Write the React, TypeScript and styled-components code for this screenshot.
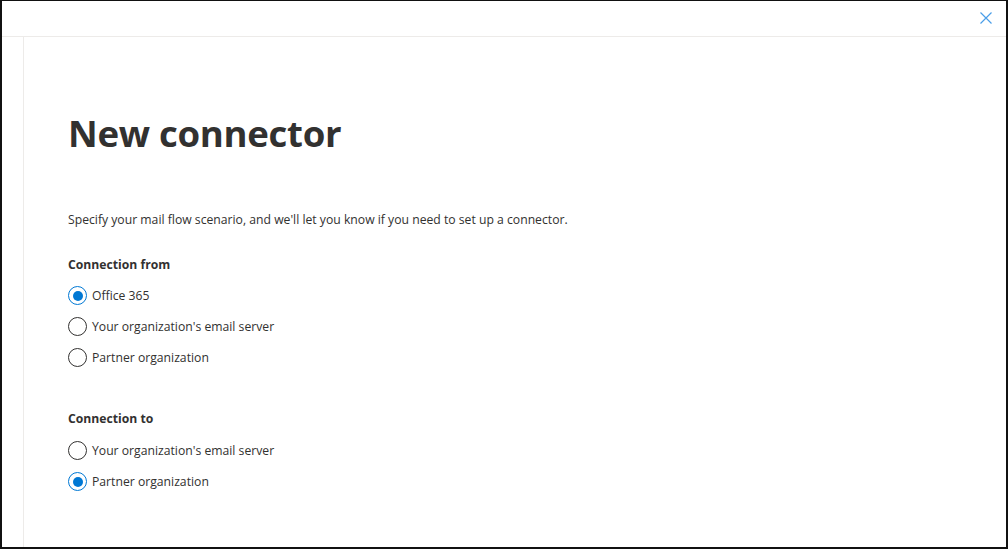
import styled, { createGlobalStyle } from "styled-components";

const GlobalStyle = createGlobalStyle`
    html, body {
        margin: 0;
        padding: 0;
        background: #fff;
    }
    body {
        font-family: "Open Sans", "Noto Sans", sans-serif;
        color: #323130;
    }
`;

interface RadioOptionProps {
    label: string;
    checked?: boolean;
}

const RadioOption: React.FC<RadioOptionProps> = ({ label, checked }) => {
    return (
        <OptionRow>
            <Circle $checked={!!checked}>{checked && <Dot />}</Circle>
            <OptionLabel>{label}</OptionLabel>
        </OptionRow>
    );
};

const App = () => {
    return (
        <>
            <GlobalStyle />
            <Frame>
                <Header>
                    <CloseButton aria-label="Close">
                        <svg width="12" height="12" viewBox="0 0 12 12">
                            <path d="M0.5 0.5 L11.5 11.5 M11.5 0.5 L0.5 11.5" stroke="#4a9ee8" strokeWidth="1.2" fill="none" />
                        </svg>
                    </CloseButton>
                </Header>
                <Body>
                    <Rail />
                    <Content>
                        <Title>New connector</Title>
                        <Description>
                            Specify your mail flow scenario, and we'll let you know if you need to set up a connector.
                        </Description>

                        <Group>
                            <GroupLabel>Connection from</GroupLabel>
                            <RadioOption label="Office 365" checked />
                            <RadioOption label="Your organization's email server" />
                            <RadioOption label="Partner organization" />
                        </Group>

                        <Group>
                            <GroupLabel>Connection to</GroupLabel>
                            <RadioOption label="Your organization's email server" />
                            <RadioOption label="Partner organization" checked />
                        </Group>
                    </Content>
                </Body>
            </Frame>
        </>
    );
};

export default App;

const Frame = styled.div`
    box-sizing: border-box;
    width: 100vw;
    height: 100vh;
    border: 2px solid #111;
    border-top-width: 1px;
    display: flex;
    flex-direction: column;
    overflow: hidden;
`;

const Header = styled.div`
    height: 36px;
    flex-shrink: 0;
    border-bottom: 1px solid #edebe9;
    display: flex;
    justify-content: flex-end;
    align-items: center;
    padding-right: 14px;
    box-sizing: border-box;
`;

const CloseButton = styled.button`
    background: none;
    border: none;
    padding: 0;
    width: 12px;
    height: 12px;
    display: flex;
    cursor: pointer;
    margin-top: -2px;
`;

const Body = styled.div`
    flex: 1;
    display: flex;
`;

const Rail = styled.div`
    width: 21px;
    flex-shrink: 0;
    border-right: 1px solid #edebe9;
`;

const Content = styled.div`
    padding: 68px 0 0 44px;
    display: flex;
    flex-direction: column;
`;

const Title = styled.h1`
    margin: 0;
    font-size: 36.6px;
    font-weight: 700;
    line-height: 56px;
    color: #323130;
    letter-spacing: -0.3px;
`;

const Description = styled.p`
    margin: 49px 0 0;
    font-size: 12.2px;
    line-height: 20px;
    color: #323130;
`;

const Group = styled.div`
    display: flex;
    flex-direction: column;
    margin-top: 25px;

    & + & {
        margin-top: 36px;
    }
`;

const GroupLabel = styled.div`
    font-size: 12.2px;
    font-weight: 700;
    line-height: 20px;
    margin-bottom: 5px;

    ${Group} + ${Group} & {
        margin-bottom: 6px;
    }
`;

const OptionRow = styled.label`
    display: flex;
    align-items: center;
    height: 31px;
    gap: 5px;
    cursor: pointer;
`;

const Circle = styled.span<{ $checked: boolean }>`
    box-sizing: border-box;
    width: 19px;
    height: 19px;
    border-radius: 50%;
    border: 1px solid ${({ $checked }) => ($checked ? "#0078d4" : "#323130")};
    display: flex;
    align-items: center;
    justify-content: center;
`;

const Dot = styled.span`
    width: 10px;
    height: 10px;
    border-radius: 50%;
    background: #0078d4;
`;

const OptionLabel = styled.span`
    font-size: 12.2px;
    line-height: 20px;
    color: #323130;
`;
